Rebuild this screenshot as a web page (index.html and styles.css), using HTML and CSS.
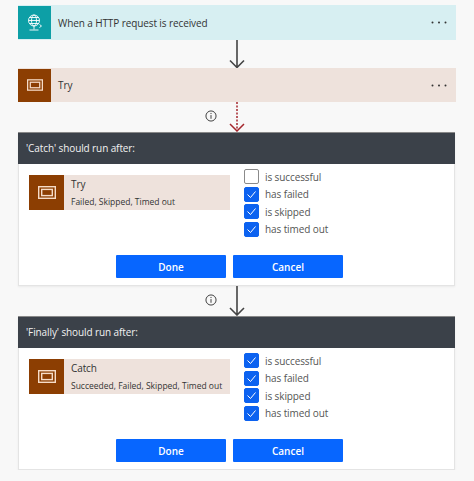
FILE: index.html
```html
<!DOCTYPE html>
<html lang="en">
<head>
    <meta charset="UTF-8">
    <title>Run after</title>
    <link rel="stylesheet" href="styles.css">
</head>
<body>

    <div class="step step-trigger">
        <div class="step-icon icon-teal">
            <svg width="16" height="18" viewBox="0 0 16 18" fill="none" stroke="#fff" stroke-width="0.900">
                <circle cx="7" cy="6.500" r="5.500"/>
                <ellipse cx="7" cy="6.500" rx="2.500" ry="5.500"/>
                <path d="M1.500 6.500h11M2.500 3.500h9M2.500 9.500h9M7 12v3.500M2.500 16h9"/>
                <path d="M12.500 10.500l2 1.500-2 1.500"/>
            </svg>
        </div>
        <span class="step-title">When a HTTP request is received</span>
        <svg class="step-more" width="16" height="3" viewBox="0 0 16 3" fill="#333">
            <circle cx="1.500" cy="1.500" r="1"/><circle cx="8" cy="1.500" r="1"/><circle cx="14.500" cy="1.500" r="1"/>
        </svg>
    </div>

    <div class="connector">
        <svg class="arrow" width="20" height="28" viewBox="0 0 20 28" fill="none" stroke="#444" stroke-width="1.600">
            <path d="M10 0v27M3 20.500l7 7 7-7"/>
        </svg>
    </div>

    <div class="step step-scope">
        <div class="step-icon icon-brown">
            <svg width="16" height="12" viewBox="0 0 18 13" fill="none" stroke="#f6dcc8" stroke-width="1.400">
                <rect x="0.700" y="0.700" width="16.600" height="11.600"/>
                <rect x="3.700" y="3.400" width="10.600" height="6.200"/>
            </svg>
        </div>
        <span class="step-title">Try</span>
        <svg class="step-more" width="16" height="3" viewBox="0 0 16 3" fill="#333">
            <circle cx="1.500" cy="1.500" r="1"/><circle cx="8" cy="1.500" r="1"/><circle cx="14.500" cy="1.500" r="1"/>
        </svg>
    </div>

    <div class="connector connector-tall">
        <svg class="info" width="12" height="12" viewBox="0 0 13 13" fill="none" stroke="#333">
            <circle cx="6.500" cy="6.500" r="5.500"/>
            <path d="M6.500 5.500v4M6.500 3.200v1.200"/>
        </svg>
        <svg class="arrow" width="20" height="30" viewBox="0 0 20 30" fill="none" stroke="#a4262c" stroke-width="1.500">
            <path d="M10 0v28" stroke-dasharray="2 1.500"/>
            <path d="M3 22l7 7 7-7"/>
        </svg>
    </div>

    <div class="panel">
        <div class="panel-head">'Catch' should run after:</div>
        <div class="panel-body">
            <div class="chip">
                <div class="chip-icon icon-brown">
                    <svg width="18" height="13" viewBox="0 0 18 13" fill="none" stroke="#f6dcc8" stroke-width="1.400">
                        <rect x="0.700" y="0.700" width="16.600" height="11.600"/>
                        <rect x="3.700" y="3.400" width="10.600" height="6.200"/>
                    </svg>
                </div>
                <div class="chip-text">
                    <div class="chip-name">Try</div>
                    <div class="chip-status">Failed, Skipped, Timed out</div>
                </div>
            </div>
            <div class="checks">
                <div class="check"><span class="box"></span>is successful</div>
                <div class="check"><span class="box on"><svg width="11" height="9" viewBox="0 0 11 9" fill="none" stroke="#fff"><path d="M1.500 4.500l3 3 5-6"/></svg></span>has failed</div>
                <div class="check"><span class="box on"><svg width="11" height="9" viewBox="0 0 11 9" fill="none" stroke="#fff"><path d="M1.500 4.500l3 3 5-6"/></svg></span>is skipped</div>
                <div class="check"><span class="box on"><svg width="11" height="9" viewBox="0 0 11 9" fill="none" stroke="#fff"><path d="M1.500 4.500l3 3 5-6"/></svg></span>has timed out</div>
            </div>
        </div>
        <div class="panel-actions">
            <button class="btn">Done</button>
            <button class="btn">Cancel</button>
        </div>
    </div>

    <div class="connector connector-tall">
        <svg class="info" width="12" height="12" viewBox="0 0 13 13" fill="none" stroke="#333">
            <circle cx="6.500" cy="6.500" r="5.500"/>
            <path d="M6.500 5.500v4M6.500 3.200v1.200"/>
        </svg>
        <svg class="arrow" width="20" height="30" viewBox="0 0 20 30" fill="none" stroke="#444" stroke-width="1.600">
            <path d="M10 0v29M3 22l7 7 7-7"/>
        </svg>
    </div>

    <div class="panel">
        <div class="panel-head">'Finally' should run after:</div>
        <div class="panel-body">
            <div class="chip">
                <div class="chip-icon icon-brown">
                    <svg width="18" height="13" viewBox="0 0 18 13" fill="none" stroke="#f6dcc8" stroke-width="1.400">
                        <rect x="0.700" y="0.700" width="16.600" height="11.600"/>
                        <rect x="3.700" y="3.400" width="10.600" height="6.200"/>
                    </svg>
                </div>
                <div class="chip-text">
                    <div class="chip-name">Catch</div>
                    <div class="chip-status">Succeeded, Failed, Skipped, Timed out</div>
                </div>
            </div>
            <div class="checks">
                <div class="check"><span class="box on"><svg width="11" height="9" viewBox="0 0 11 9" fill="none" stroke="#fff"><path d="M1.500 4.500l3 3 5-6"/></svg></span>is successful</div>
                <div class="check"><span class="box on"><svg width="11" height="9" viewBox="0 0 11 9" fill="none" stroke="#fff"><path d="M1.500 4.500l3 3 5-6"/></svg></span>has failed</div>
                <div class="check"><span class="box on"><svg width="11" height="9" viewBox="0 0 11 9" fill="none" stroke="#fff"><path d="M1.500 4.500l3 3 5-6"/></svg></span>is skipped</div>
                <div class="check"><span class="box on"><svg width="11" height="9" viewBox="0 0 11 9" fill="none" stroke="#fff"><path d="M1.500 4.500l3 3 5-6"/></svg></span>has timed out</div>
            </div>
        </div>
        <div class="panel-actions">
            <button class="btn">Done</button>
            <button class="btn">Cancel</button>
        </div>
    </div>

</body>
</html>
```

FILE: styles.css
```css
* {
    box-sizing: border-box;
}

body {
    margin: 0;
    padding: 5px 18px 0;
    background-color: #f8f8f8;
    font-family: "Open Sans", "Noto Sans", sans-serif;
    color: #333;
    font-size: 10px;
    letter-spacing: -0.1px;
}

.step {
    display: flex;
    align-items: center;
    height: 34px;
}

.step-trigger {
    height: 35px;
    background-color: #d7eff2;
}

.step-scope {
    background-color: #eee2dc;
}

.step-icon {
    width: 33px;
    height: 33px;
    display: flex;
    justify-content: center;
    align-items: center;
}

.icon-teal {
    background-color: #0d9fa6;
}

.icon-brown {
    background-color: #8c3e02;
}

.step-title {
    margin-left: 7px;
    flex: 1;
}

.step-more {
    margin-right: 9px;
}

.connector {
    display: grid;
    grid-template-columns: 1fr 20px 1fr;
    column-gap: 10px;
    align-items: start;
    height: 28px;
}

.connector-tall {
    height: 30px;
}

.arrow {
    grid-column: 2;
    grid-row: 1;
    display: block;
}

.info {
    grid-column: 1;
    grid-row: 1;
    justify-self: end;
    margin-top: 8px;
}

.panel {
    width: 437px;
    height: 154px;
    background-color: #fff;
    border: 1px solid #e4e4e4;
    border-top: 0;
    box-shadow: 0 1px 2px rgba(0, 0, 0, 0.06);
}

.panel-head {
    height: 32px;
    margin: 0 -1px;
    padding-left: 8px;
    background-color: #3b4149;
    border-top: 1px solid #888;
    color: #f2f2f2;
    line-height: 31px;
}

.panel-body {
    display: flex;
    height: 91px;
    padding: 4px 0 0 10px;
}

.chip {
    display: flex;
    width: 201px;
    height: 35px;
    margin-top: 7px;
    background-color: #eee2dc;
}

.chip-icon {
    width: 35px;
    height: 35px;
    display: flex;
    justify-content: center;
    align-items: center;
}

.chip-text {
    margin-left: 7px;
}

.chip-name {
    margin-top: 1px;
    line-height: 16px;
}

.chip-status {
    margin-top: 3px;
    font-size: 8.500px;
    line-height: 13px;
    letter-spacing: 0;
    white-space: nowrap;
}

.checks {
    margin-left: 14px;
}

.check {
    display: flex;
    align-items: center;
    height: 17.500px;
    color: #555;
}

.box {
    width: 15px;
    height: 15px;
    margin-right: 6px;
    display: flex;
    justify-content: center;
    align-items: center;
    background-color: #fff;
    border: 1px solid #8a8a8a;
    border-radius: 2px;
}

.box.on {
    background-color: #0c62f0;
    border-color: #0c62f0;
}

.panel-actions {
    display: flex;
    gap: 7px;
    padding-left: 97px;
}

.btn {
    width: 110px;
    height: 23px;
    padding: 0;
    background-color: #0766ff;
    border: 0;
    border-radius: 1px;
    color: #fff;
    font-family: inherit;
    font-size: 10px;
    font-weight: 600;
}
```
